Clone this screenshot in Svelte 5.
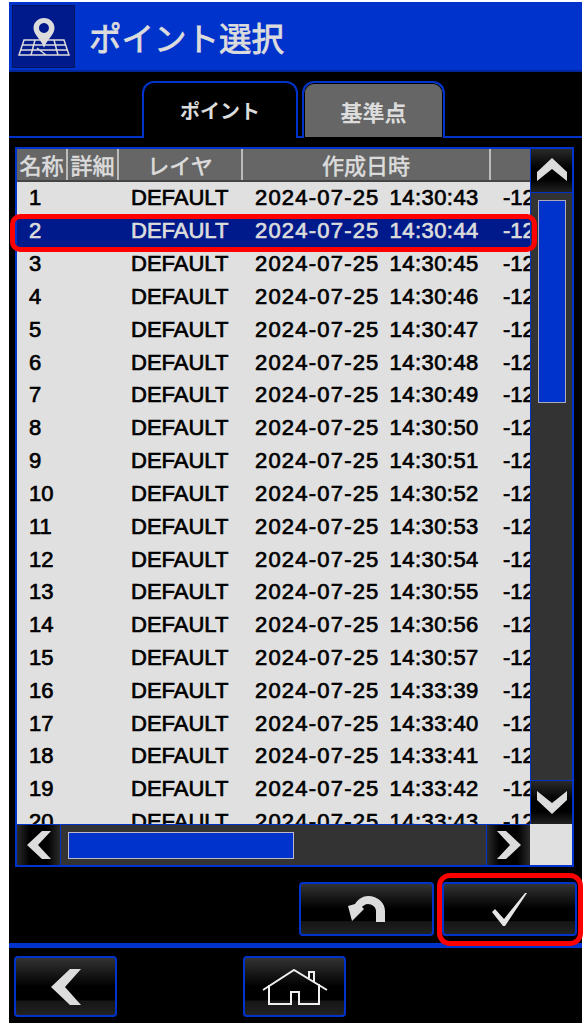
<script>
  const times = ['14:30:43','14:30:44','14:30:45','14:30:46','14:30:47','14:30:48','14:30:49','14:30:50','14:30:51','14:30:52','14:30:53','14:30:54','14:30:55','14:30:56','14:30:57','14:33:39','14:33:40','14:33:41','14:33:42','14:33:43'];
  const rows = times.map((time, i) => ({ no: i + 1, time }));
  const selected = 2;
</script>

<div class="screen">
  <header class="title-bar">
    <div class="title-icon">
      <svg width="52" height="38" viewBox="0 0 52 38" fill="none" stroke="#dcdcdc">
        <path stroke-width="1.5" d="M6 22H46L51 37H1ZM4 27H48M2.500 32H49.500M17 22L13 37M36 22L40 37M19 30L28 37" />
        <path fill="#dcdcdc" stroke="none" fill-rule="evenodd" d="M26 0C20 0 15.500 4.500 15.500 10C15.500 17 23 21 26 30C29 21 36.500 17 36.500 10C36.500 4.500 32 0 26 0ZM26 5A5 5 0 1 1 25.900 5Z" />
      </svg>
    </div>
    <h1>ポイント選択</h1>
  </header>

  <div class="tabs">
    <div class="tab active">ポイント</div>
    <div class="tab">基準点</div>
  </div>

  <div class="panel">
    <div class="list">
      <div class="row head">
        <span class="c1">名称</span><span class="c2">詳細</span><span class="c3">レイヤ</span><span class="c4">作成日時</span><span class="c5"></span>
      </div>
      {#each rows as r}
        <div class="row" class:selected={r.no === selected}>
          <span class="c1 no">{r.no}</span><span class="c2"></span><span class="c3 layer">DEFAULT</span><span class="c4 stamp"><span class="date">2024-07-25</span><span class="time">{r.time}</span></span><span class="c5 val">-12</span>
        </div>
      {/each}
    </div>

    <div class="vscroll">
      <button class="sbtn up">
        <svg width="30" height="23" viewBox="0 0 30 23"><path fill="#dcdcdc" d="M15 0L30 14V23L15 11L0 23V14Z" /></svg>
      </button>
      <div class="vtrack"><div class="vthumb"></div></div>
      <button class="sbtn">
        <svg width="30" height="23" viewBox="0 0 30 23"><path fill="#dcdcdc" d="M15 23L30 9V0L15 12L0 0V9Z" /></svg>
      </button>
    </div>

    <div class="hscroll">
      <button class="sbtn">
        <svg width="24" height="28" viewBox="0 0 24 28"><path fill="#dcdcdc" d="M0 14L15 0H24L11 14L24 28H15Z" /></svg>
      </button>
      <div class="htrack"><div class="hthumb"></div></div>
      <button class="sbtn">
        <svg width="24" height="28" viewBox="0 0 24 28"><path fill="#dcdcdc" d="M24 14L9 0H0L13 14L0 28H9Z" /></svg>
      </button>
    </div>
    <div class="corner"></div>
    <div class="row-mark"></div>
  </div>

  <div class="actions">
    <button class="btn undo">
      <svg width="37" height="26" viewBox="0 0 37 26">
        <path fill="#dcdcdc" d="M0 10L7 8C10 3 15 0 20 0C30 0 37 7 37 15V26H28V15C28 11 24 8 20 8C17 8 15 10 14 11L16 13L4 25Z" />
      </svg>
    </button>
    <div class="ok-wrap">
      <button class="btn ok">
        <svg width="35" height="33" viewBox="0 0 35 33">
          <path fill="#e6e6e6" d="M0 19L3 16L12 26L33 0H35L13 33H11Z" />
        </svg>
      </button>
    </div>
  </div>

  <nav class="bottom">
    <button class="btn back">
      <svg width="30" height="36" viewBox="0 0 30 36"><path fill="#dcdcdc" d="M0 18L19 0H30L14 18L30 36H19Z" /></svg>
    </button>
    <button class="btn home">
      <svg width="66" height="36" viewBox="0 0 66 36" fill="none" stroke="#f0f0f0" stroke-width="2">
        <path d="M1 21L32 1L65 21M7 16V35H29V23H37V35H57V15M47 9V3H52V13" />
      </svg>
    </button>
  </nav>
</div>

<style>
  :global(body) {
    margin: 0;
    background: #fff;
  }
  .screen {
    width: 573px;
    height: 1021px;
    margin: 2px 0 0 9px;
    background: #000;
    display: flex;
    flex-direction: column;
    font-family: "Liberation Sans", "Noto Sans CJK JP", sans-serif;
    color: #dcdcdc;
  }
  .title-bar {
    height: 70px;
    box-sizing: border-box;
    padding: 3px;
    background: #0033cc;
    border-bottom: 2px solid #00269a;
    display: flex;
    align-items: flex-start;
    gap: 14px;
  }
  .title-icon {
    width: 63px;
    height: 63px;
    box-sizing: border-box;
    background: #001a8c;
    border: 1px solid #00165f;
    display: flex;
    align-items: center;
    justify-content: center;
    padding-top: 1px;
  }
  h1 {
    margin: 0;
    font: 400 32.500px/64px "Noto Sans CJK JP", sans-serif;
    -webkit-text-stroke: 0.8px #dcdcdc;
    color: #dcdcdc;
  }
  .tabs {
    height: 57px;
    margin-top: 9px;
    padding-left: 133px;
    display: flex;
    gap: 4px;
    border-bottom: 2px solid #0033cc;
    box-sizing: border-box;
  }
  .tab {
    width: 143px;
    height: 57px;
    box-sizing: border-box;
    border: 2px solid #0033cc;
    border-bottom: 0;
    border-radius: 12px 12px 0 0;
    background: #666;
    box-shadow: inset 0 0 0 1px #000;
    font: 700 22px/56px "Noto Sans CJK JP", sans-serif;
    text-align: center;
    color: #dcdcdc;
  }
  .tab.active {
    width: 156px;
    background: #000;
    box-shadow: none;
    font-size: 20px;
    position: relative;
    z-index: 1;
    line-height: 55px;
  }
  .panel {
    position: relative;
    width: 559px;
    height: 720px;
    margin: 9px 0 0 6px;
    box-sizing: border-box;
    border: 2px solid #0033cc;
    background: #000;
    display: grid;
    grid-template-columns: 513px 42px;
    grid-template-rows: 675px 41px;
  }
  .list {
    overflow: hidden;
    background: #e0e0e0;
    color: #000;
  }
  .row {
    display: flex;
    height: 32.83px;
    align-items: center;
    font-size: 22px;
    -webkit-text-stroke: 0.7px currentColor;
    white-space: nowrap;
  }
  .row.head {
    height: 33px;
    background: #666;
    color: #dcdcdc;
    border-bottom: 2px solid #444;
    box-sizing: border-box;
    -webkit-text-stroke: 0.6px currentColor;
    font: 400 22px/30px "Noto Sans CJK JP", sans-serif;
  }
  .row.selected {
    background: #001a8c;
    color: #dcdcdc;
  }
  .c1 { width: 51px; flex: none; }
  .c2 { width: 51px; flex: none; }
  .c3 { width: 124px; flex: none; }
  .c4 { width: 248px; flex: none; }
  .c5 { flex: 1; }
  .head span {
    box-sizing: border-box;
    height: 100%;
    text-align: center;
    border-right: 2px solid #bbb;
  }
  .head .c5 { border-right: 0; }
  .no { padding-left: 12px; box-sizing: border-box; }
  .layer { padding-left: 12px; box-sizing: border-box; }
  .stamp {
    box-sizing: border-box;
    padding-left: 12px;
    display: flex;
    gap: 10px;
  }
  .date { letter-spacing: 1.2px; }
  .time { letter-spacing: 0.45px; }
  .val { padding-left: 12px; }
  .row-mark {
    position: absolute;
    left: -7px;
    top: 65px;
    width: 527px;
    height: 38px;
    box-sizing: border-box;
    border: 5px solid #f00;
    border-radius: 10px;
  }
  .vscroll {
    display: flex;
    flex-direction: column;
    background: #333;
    border-left: 1px solid #0033cc;
  }
  .vtrack { flex: 1; padding: 8px 7px; }
  .vthumb {
    width: 28px;
    height: 203px;
    box-sizing: border-box;
    background: #0033cc;
    border: 1px solid #aab;
  }
  .sbtn {
    flex: none;
    width: 100%;
    height: 43px;
    padding: 0;
    border: 0;
    outline: 1px solid #0033cc;
    background: linear-gradient(#2a2a2a, #000 45%, #000 70%, #222);
    display: flex;
    align-items: center;
    justify-content: center;
  }
  .sbtn.up { padding-bottom: 3px; }
  .hscroll {
    display: flex;
    background: #333;
    border-top: 1px solid #0033cc;
  }
  .hscroll .sbtn {
    width: 43px;
    height: 40px;
    background: linear-gradient(90deg, #2a2a2a, #000 30%, #000 70%, #2a2a2a);
  }
  .htrack { flex: 1; padding: 7px 8px; }
  .hthumb {
    width: 226px;
    height: 27px;
    box-sizing: border-box;
    background: #0033cc;
    border: 1px solid #bbc;
  }
  .corner { background: #e0e0e0; }
  .btn {
    padding: 0;
    box-sizing: border-box;
    border: 2px solid #0033cc;
    border-radius: 4px;
    background: linear-gradient(#333, #000 50%, #000 74%, #151515 75%, #222);
    display: flex;
    align-items: center;
    justify-content: center;
  }
  .actions {
    height: 81px;
    box-sizing: border-box;
    padding: 15px 0 0 290px;
    display: flex;
    gap: 8px;
    align-items: flex-start;
    border-bottom: 5px solid #0033cc;
  }
  .actions .btn {
    width: 135px;
    height: 54px;
  }
  .ok-wrap {
    display: flex;
    position: relative;
  }
  .ok-wrap::after {
    content: "";
    position: absolute;
    left: -5px;
    top: -9px;
    width: 146px;
    height: 73px;
    box-sizing: border-box;
    border: 5px solid #f00;
    border-radius: 13px;
    pointer-events: none;
  }
  .bottom {
    padding: 8px 0 0 5px;
    display: flex;
    gap: 126px;
  }
  .bottom .btn {
    width: 103px;
    height: 61px;
  }
</style>
